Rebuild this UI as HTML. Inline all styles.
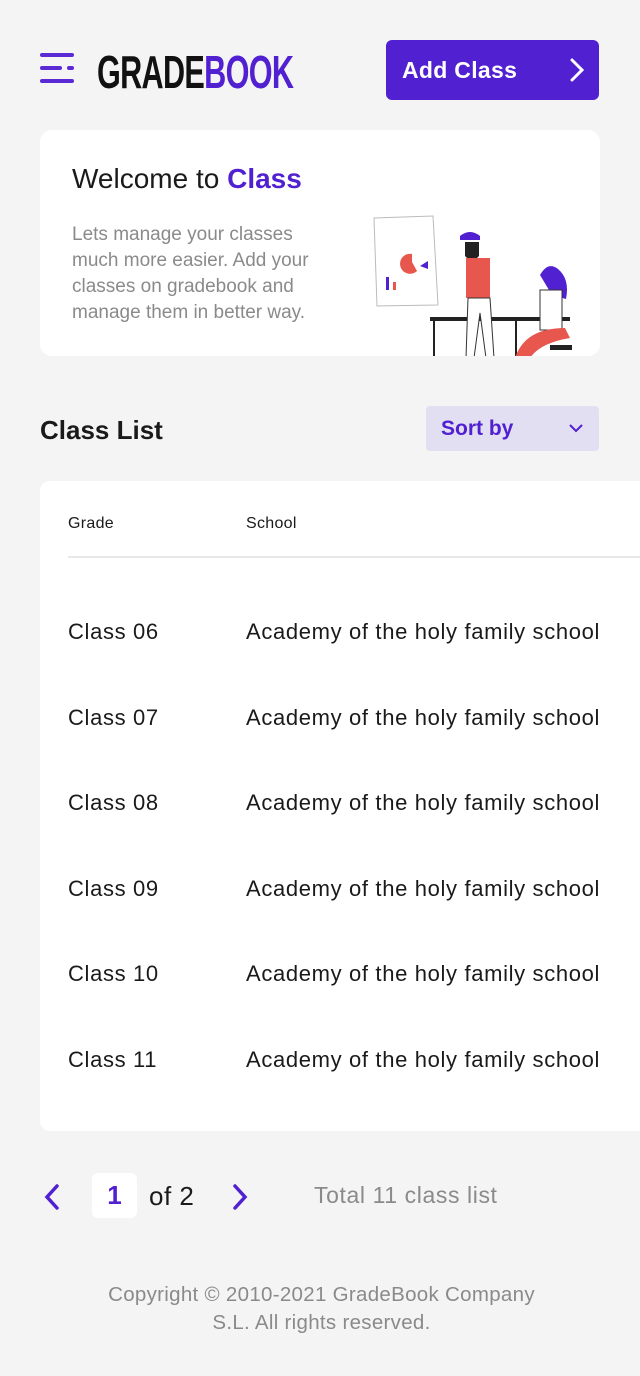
<!DOCTYPE html>
<html><head><meta charset="utf-8"><style>
*{margin:0;padding:0;box-sizing:border-box}
body{width:640px;height:1376px;background:#f4f4f4;font-family:"Liberation Sans",sans-serif;position:relative;overflow:hidden;color:#1a1a1a}
.abs{position:absolute}
.btn{left:386px;top:40px;width:213px;height:60px;background:#5120d0;border-radius:6px;color:#fff;font-size:23px;font-weight:bold;line-height:60px;padding-left:16px;letter-spacing:0.3px}
.card{left:40px;top:130px;width:560px;height:226px;background:#fff;border-radius:12px;overflow:hidden}
.tbl{left:40px;top:481px;width:620px;height:650px;background:#fff;border-radius:10px}
.row{position:absolute;font-size:22px;letter-spacing:0.65px;color:#1a1a1a}
</style></head><body>
<svg class="abs" style="left:40px;top:52px" width="36" height="32" viewBox="0 0 36 32"><g stroke="#5a2ad4" stroke-width="4" stroke-linecap="round"><line x1="2" y1="3" x2="32" y2="3"/><line x1="2" y1="16" x2="20" y2="16"/><line x1="29" y1="16" x2="32" y2="16"/><line x1="2" y1="29" x2="32" y2="29"/></g></svg>
<div class="abs" style="left:97px;top:45px;font-size:46px;font-weight:bold;letter-spacing:-1px;transform:scaleX(0.665);transform-origin:left;white-space:nowrap"><span style="color:#111">GRADE</span><span style="color:#5120d0">BOOK</span></div>
<div class="abs btn">Add Class<svg class="abs" style="right:14px;top:18px" width="16" height="24" viewBox="0 0 16 24"><path d="M3 2l10 10-10 10" stroke="#fff" stroke-width="3" fill="none" stroke-linecap="round"/></svg></div>
<div class="abs card">
<div class="abs" style="left:32px;top:33px;font-size:28px">Welcome to <b style="color:#5120d0">Class</b></div>
<div class="abs" style="left:32px;top:92px;font-size:19px;line-height:26px;color:#8a8a8a;width:268px">Lets manage your classes much more easier. Add your classes on gradebook and manage them in better way.</div>
<svg class="abs" style="left:320px;top:70px" width="240" height="160" viewBox="360 200 240 160">
<polygon points="374,218 433,216 438,305 377,306" fill="#fff" stroke="#bbb"/>
<path d="M412,254 a10,10 0 1,0 5,17 l-5,-9z" fill="#e8574d"/><path d="M420,266 l8,-5 0,8z" fill="#5120d0"/>
<rect x="386" y="277" width="3" height="13" fill="#5120d0"/><rect x="393" y="282" width="3" height="8" fill="#e8574d"/>
<rect x="430" y="317" width="140" height="4" fill="#222"/><line x1="434" y1="321" x2="434" y2="360" stroke="#222" stroke-width="2"/><line x1="516" y1="321" x2="516" y2="360" stroke="#222" stroke-width="2"/>
<path d="M460,236 q10,-8 20,0 v4 h-20z" fill="#5120d0"/><path d="M465,242 h14 v14 q-7,8 -14,0z" fill="#222"/>
<rect x="466" y="258" width="24" height="40" fill="#e8574d"/><path d="M468,298 h22 l4,60 h-8 l-6,-45 -6,45 h-8z" fill="#fff" stroke="#333"/>
<path d="M540,275 q8,-14 18,-6 q12,10 8,30 l-14,-4z" fill="#5120d0"/>
<path d="M540,290 h22 v40 h-22z" fill="#fff" stroke="#333"/><path d="M515,358 q10,-30 50,-30 l5,10 q-30,5 -40,20z" fill="#e8574d"/>
<rect x="550" y="345" width="22" height="5" fill="#222"/>
</svg>
</div>
<div class="abs" style="left:40px;top:415px;font-size:26px;font-weight:bold">Class List</div>
<div class="abs" style="left:426px;top:406px;width:173px;height:45px;background:#e3dff2;border-radius:4px;color:#5120d0;font-size:21px;font-weight:bold;line-height:45px;padding-left:15px">Sort by<svg class="abs" style="right:16px;top:18px" width="14" height="9" viewBox="0 0 14 9"><path d="M1 1l6 6 6-6" stroke="#5120d0" stroke-width="2" fill="none"/></svg></div>
<div class="abs tbl">
<div class="row" style="left:28px;top:34px;font-size:16px;letter-spacing:0.3px">Grade</div>
<div class="row" style="left:206px;top:34px;font-size:16px;letter-spacing:0.3px">School</div>
<div class="abs" style="left:28px;top:75px;width:600px;height:2px;background:#e8e8e8"></div>
<div class="row" style="left:28px;top:138px">Class 06</div><div class="row" style="left:206px;top:138px">Academy of the holy family school</div>
<div class="row" style="left:28px;top:224px">Class 07</div><div class="row" style="left:206px;top:224px">Academy of the holy family school</div>
<div class="row" style="left:28px;top:309px">Class 08</div><div class="row" style="left:206px;top:309px">Academy of the holy family school</div>
<div class="row" style="left:28px;top:395px">Class 09</div><div class="row" style="left:206px;top:395px">Academy of the holy family school</div>
<div class="row" style="left:28px;top:480px">Class 10</div><div class="row" style="left:206px;top:480px">Academy of the holy family school</div>
<div class="row" style="left:28px;top:566px">Class 11</div><div class="row" style="left:206px;top:566px">Academy of the holy family school</div>
</div>
<svg class="abs" style="left:44px;top:1184px" width="16" height="26" viewBox="0 0 16 26"><path d="M13 2l-10 11 10 11" stroke="#5120d0" stroke-width="3.5" fill="none" stroke-linecap="round"/></svg>
<div class="abs" style="left:92px;top:1173px;width:45px;height:45px;background:#fff;border-radius:6px;color:#5120d0;font-size:26px;font-weight:bold;text-align:center;line-height:45px">1</div>
<div class="abs" style="left:149px;top:1181px;font-size:26px;letter-spacing:0.5px">of 2</div>
<svg class="abs" style="left:232px;top:1184px" width="16" height="26" viewBox="0 0 16 26"><path d="M3 2l10 11-10 11" stroke="#5120d0" stroke-width="3.5" fill="none" stroke-linecap="round"/></svg>
<div class="abs" style="left:314px;top:1182px;font-size:23px;letter-spacing:0.6px;color:#8a8a8a">Total 11 class list</div>
<div class="abs" style="left:0;top:1281px;width:643px;text-align:center;font-size:20.5px;letter-spacing:0.3px;line-height:28px;color:#8a8a8a">Copyright © 2010-2021 GradeBook Company<br>S.L. All rights reserved.</div>
</body></html>
